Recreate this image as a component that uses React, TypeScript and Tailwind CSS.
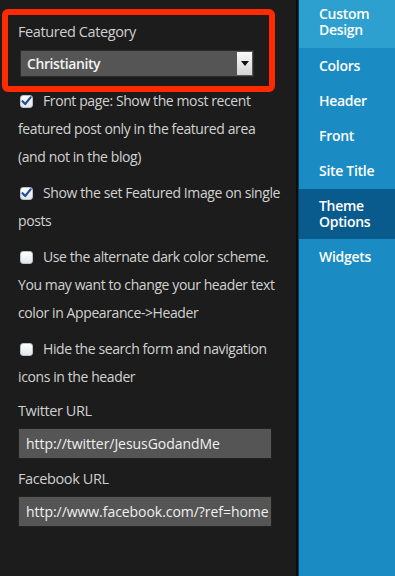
import { ReactNode } from "react"

const font = { fontFamily: '"Open Sans", "Liberation Sans", sans-serif' }

function Checkbox({ checked }: { checked?: boolean }) {
  return (
    <span className="inline-flex items-center justify-center align-middle w-[13px] h-[13px] rounded-[3px] border border-[#b9c2cc] bg-gradient-to-b from-[#ffffff] to-[#e3e6ea] mr-[10px] ml-[2px] relative -top-[1px]">
      {checked && (
        <svg width="11" height="10" viewBox="0 0 11 10" className="-mt-[1px]">
          <path d="M1.5 5.2 L4.2 8 L9.6 1.4" fill="none" stroke="#1f4f9c" strokeWidth="2.2" strokeLinecap="round" strokeLinejoin="round" />
        </svg>
      )}
    </span>
  )
}

function Row({ checked, children }: { checked?: boolean; children: ReactNode }) {
  return (
    <p className="text-[14px] tracking-[-0.4px] leading-[28px] text-[#d2d2d2] mb-[8px] whitespace-nowrap">
      <Checkbox checked={checked} />
      {children}
    </p>
  )
}

const menu = ["Colors", "Header", "Front", "Site Title"]

export default function App() {
  return (
    <div className="flex w-[395px] h-[576px] overflow-hidden bg-[#1c1c1c]" style={font}>
      {/* settings panel */}
      <div className="relative w-[296px] shrink-0 pl-[18px] pt-[22px]">
        <label className="block text-[14.5px] tracking-[-0.4px] leading-[20px] text-[#cfcfcf]">Featured Category</label>
        <div className="mt-[8px] ml-[2px] w-[234px] h-[27px] flex bg-[#555555] border border-[#2b2b2b]">
          <span className="flex-1 pl-[6px] text-[14px] tracking-[-0.4px] leading-[25px] font-semibold text-[#f2f2f2]">Christianity</span>
          <span className="w-[15px] my-[1px] mr-[1px] flex items-center justify-center bg-gradient-to-b from-[#fbfbfb] to-[#d4d4d4]">
            <span className="w-0 h-0 border-l-[4px] border-r-[4px] border-t-[5px] border-l-transparent border-r-transparent border-t-[#111]" />
          </span>
        </div>

        <div className="mt-[10px]">
          <Row checked>
            Front page: Show the most recent<br />
            featured post only in the featured area<br />
            (and not in the blog)
          </Row>
          <Row checked>
            Show the set Featured Image on single<br />
            posts
          </Row>
          <Row>
            Use the alternate dark color scheme.<br />
            You may want to change your header text<br />
            color in Appearance-&gt;Header
          </Row>
          <Row>
            Hide the search form and navigation<br />
            icons in the header
          </Row>
        </div>

        <label className="block mt-[10px] text-[14.5px] tracking-[-0.4px] leading-[20px] text-[#cfcfcf]">Twitter URL</label>
        <div className="mt-[7px] w-[254px] h-[31px] bg-[#555555] border border-[#222] px-[7px] text-[14px] tracking-[-0.05px] leading-[29px] text-[#f0f0f0] overflow-hidden whitespace-nowrap">
          http://twitter/JesusGodandMe
        </div>
        <label className="block mt-[10px] text-[14.5px] tracking-[-0.4px] leading-[20px] text-[#cfcfcf]">Facebook URL</label>
        <div className="mt-[7px] w-[254px] h-[31px] bg-[#555555] border border-[#222] px-[7px] text-[14px] tracking-[-0.05px] leading-[29px] text-[#f0f0f0] overflow-hidden whitespace-nowrap">
          http://www.facebook.com/?ref=home
        </div>

        {/* annotation */}
        <div className="absolute left-[2px] top-[9px] w-[273px] h-[83px] border-[6px] border-[#ff2a00] rounded-[6px]" />
      </div>

      <div className="w-[2px] bg-[#0d0d0d]" />

      {/* sidebar */}
      <nav className="flex-1 bg-[#1a8bc3] border-l border-[#0b3f5c] text-white text-[14px] tracking-[-0.3px] font-semibold">
        <div className="bg-[#2ea0cf] pl-[20px] pt-[6px] pb-[10px] leading-[16px]">Custom<br />Design</div>
        {menu.map((m) => (
          <div key={m} className="h-[35px] pl-[20px] leading-[35px]">{m}</div>
        ))}
        <div className="bg-[#0a5b8d] pl-[20px] pt-[9px] pb-[9px] leading-[16px] mt-[1px]">Theme<br />Options</div>
        <div className="h-[35px] pl-[20px] leading-[35px]">Widgets</div>
      </nav>
    </div>
  )
}
